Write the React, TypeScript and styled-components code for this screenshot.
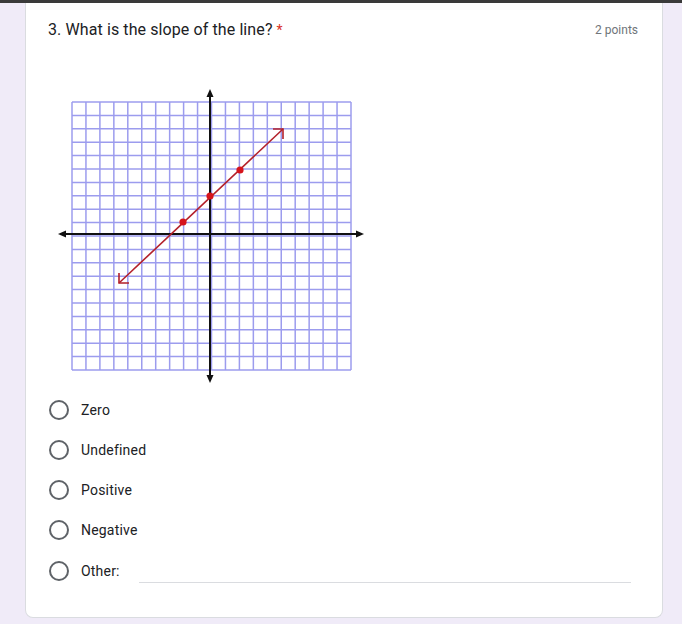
import React from "react";
import styled, { createGlobalStyle } from "styled-components";

const Global = createGlobalStyle`
  html, body { margin: 0; padding: 0; }
  body {
    background: #f0ebf8;
    font-family: Roboto, "Liberation Sans", Arial, sans-serif;
    color: #202124;
  }
`;

const TopBar = styled.div`
  height: 3px;
  background: #3a3a3a;
`;

const Page = styled.div`
  padding: 0 19px 8px 25px;
`;

const Card = styled.div`
  background: #fff;
  border: 1px solid #dadce0;
  border-top: none;
  border-radius: 0 0 8px 8px;
  padding: 15px 24px 26px 22px;
  display: flex;
  flex-direction: column;
`;

const Header = styled.div`
  display: flex;
  justify-content: space-between;
  align-items: center;
  height: 24px;
`;

const Title = styled.div`
  font-size: 16px;
  line-height: 24px;
  letter-spacing: 0.1px;
  color: #202124;
`;

const Required = styled.span`
  color: #d93025;
  margin-left: 4px;
  font-size: 14px;
`;

const Points = styled.div`
  font-size: 12px;
  color: #70757a;
`;

const Figure = styled.svg`
  display: block;
  margin-top: 38px;
`;

const Options = styled.div`
  display: flex;
  flex-direction: column;
  padding-top: 1px;
`;

const Option = styled.label<{ $gap?: number }>`
  display: flex;
  align-items: center;
  height: 40px;
  padding-left: 1px;
  margin-top: ${(p) => p.$gap ?? 0}px;
`;

const Radio = styled.span`
  width: 16px;
  height: 16px;
  border: 2px solid #5f6368;
  border-radius: 50%;
  flex: none;
`;

const Label = styled.span`
  font-size: 14px;
  margin-left: 12px;
  color: #202124;
  letter-spacing: 0.2px;
`;

const OtherInput = styled.div`
  flex: 1;
  margin-left: 19px;
  margin-right: 7px;
  height: 1px;
  background: #dadce0;
  align-self: flex-end;
  margin-bottom: 8px;
`;

const GraphFigure = () => {
  const ox = 48;
  const oy = 80;
  const gx0 = 72 - ox;
  const gy0 = 102 - oy;
  const cw = (351 - 72) / 20;
  const ch = (370 - 102) / 20;
  const lines: React.ReactNode[] = [];
  for (let i = 0; i <= 20; i++) {
    lines.push(
      <line key={"v" + i} x1={gx0 + i * cw} y1={gy0} x2={gx0 + i * cw} y2={gy0 + 20 * ch} stroke="#9c9cee" strokeWidth={1.5} />
    );
    lines.push(
      <line key={"h" + i} x1={gx0} y1={gy0 + i * ch} x2={gx0 + 20 * cw} y2={gy0 + i * ch} stroke="#9c9cee" strokeWidth={1.5} />
    );
  }
  const ax = 210 - ox;
  const ay = 234 - oy;
  const p = (x: number, y: number) => `${x - ox},${y - oy}`;
  return (
    <Figure width={330} height={309} viewBox="0 0 330 309">
      {lines}
      <line x1={62 - ox} y1={ay} x2={360 - ox} y2={ay} stroke="#111" strokeWidth={2} />
      <line x1={ax} y1={94 - oy} x2={ax} y2={378 - oy} stroke="#111" strokeWidth={2} />
      <polygon points={`${p(58, 234)} ${p(66, 230.5)} ${p(66, 237.5)}`} fill="#111" />
      <polygon points={`${p(364, 234)} ${p(356, 230.5)} ${p(356, 237.5)}`} fill="#111" />
      <polygon points={`${p(210, 89)} ${p(206.5, 97)} ${p(213.5, 97)}`} fill="#111" />
      <polygon points={`${p(210, 383)} ${p(206.5, 375)} ${p(213.5, 375)}`} fill="#111" />
      <line x1={119 - ox} y1={283 - oy} x2={283 - ox} y2={129 - oy} stroke="#b3202a" strokeWidth={1.6} />
      <polyline points={`${p(119, 273)} ${p(119, 283)} ${p(129, 283)}`} fill="none" stroke="#b3202a" strokeWidth={1.6} />
      <polyline points={`${p(273, 129)} ${p(283, 129)} ${p(283, 139)}`} fill="none" stroke="#b3202a" strokeWidth={1.6} />
      <circle cx={183 - ox} cy={222 - oy} r={3.6} fill="#d6141c" />
      <circle cx={210 - ox} cy={196 - oy} r={3.6} fill="#d6141c" />
      <circle cx={240 - ox} cy={170 - oy} r={3.6} fill="#d6141c" />
    </Figure>
  );
};

const options = ["Zero", "Undefined", "Positive", "Negative"];

export default function App() {
  return (
    <>
      <Global />
      <TopBar />
      <Page>
        <Card>
          <Header>
            <Title>
              3. What is the slope of the line?<Required>*</Required>
            </Title>
            <Points>2 points</Points>
          </Header>
          <GraphFigure />
          <Options>
            {options.map((o) => (
              <Option key={o}>
                <Radio />
                <Label>{o}</Label>
              </Option>
            ))}
            <Option $gap={1}>
              <Radio />
              <Label>Other:</Label>
              <OtherInput />
            </Option>
          </Options>
        </Card>
      </Page>
    </>
  );
}
